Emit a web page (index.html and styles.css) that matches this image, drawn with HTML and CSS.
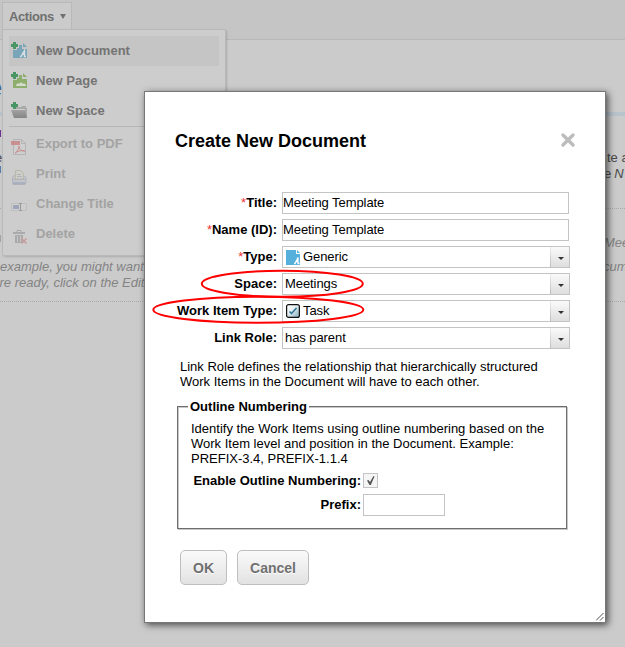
FILE: index.html
```html
<!DOCTYPE html>
<html lang="en">
<head>
<meta charset="utf-8">
<title>Create New Document</title>
<link rel="stylesheet" href="styles.css">
</head>
<body>
<div class="page">
  <header class="toolbar"><span class="tab">Actions <i class="caret"></i></span></header>
  <main class="doc">
    <div class="heading">e</div>
    <div class="rule"></div>
    <div class="row purple"><i class="sliver violet"></i></div>
    <div class="row dark"><span class="tail">e</span><span>te a</span></div>
    <div class="row dark second"><i class="sliver blue"></i><span>e <em>N</em></span></div>
    <div class="dots first"></div>
    <div class="row muted meet"><i class="sliver"></i><em>Mee</em></div>
    <div class="row muted example"><em>example, you might want</em><em>cum</em></div>
    <div class="row muted ready"><em>'re ready, click on the Edit</em></div>
    <div class="dots second-dots"></div>
  </main>

  <nav class="menu">
    <div class="item active">
      <svg class="icon" viewBox="0 0 16 16"><path fill="#79a5b8" d="M2 3h9v4h5v9H2z"/><path fill="#79a5b8" d="M12 1l4 4h-4z"/><path fill="#cbcbcb" d="M0 2h8v4H6v2H2V6H0z"/><path fill="#499564" d="M2 0h3v2h2v3H5v2H2V5H0V2h2z"/><path fill="none" stroke="#d7dfe2" stroke-width="1.4" d="M9 14.5h1l3.500-6v6H15M11 12h3"/></svg>
      <span>New Document</span></div>
    <div class="item">
      <svg class="icon" viewBox="0 0 16 16"><path fill="#8eae6d" d="M2 3h9v4h5v9H2z"/><path fill="#8eae6d" d="M12 1l4 4h-4z"/><path fill="#cbcbcb" d="M0 2h8v4H6v2H2V6H0z"/><path fill="#499564" d="M2 0h3v2h2v3H5v2H2V5H0V2h2z"/><path fill="#d5dccd" d="M5 14v-1l2-2 1 1 2-2 2 2 1-1 2 2v1z"/></svg>
      <span>New Page</span></div>
    <div class="item">
      <svg class="icon" viewBox="0 0 16 16"><defs><linearGradient id="fold" x2="0" y2="1"><stop stop-color="#a2a2a2"/><stop offset="1" stop-color="#858585"/></linearGradient></defs><path fill="#aaa" d="M3 5h7l1-1h4v3H3zM14 6h2v9h-2z"/><path fill="url(#fold)" d="M0 8h14l2 8H3z"/><path fill="#499564" d="M2 0h3v2h2v3H5v2H2V5H0V2h2z"/></svg>
      <span>New Space</span></div>
    <div class="separator"></div>
    <div class="item disabled">
      <svg class="icon" viewBox="0 0 16 16"><path fill="#cfcfcf" stroke="#b3b3b3" d="M2.500.5h8l4 4v11h-12z"/><path fill="none" stroke="#b3b3b3" d="M10.500.5v4h4"/><path fill="#c89090" d="M0 2h9v4H0z"/><path fill="none" stroke="#c98d8d" d="M4 14c3-2 4-5 4-7 0 3 2 5 6 5-4-1-7 0-10 2z"/></svg>
      <span>Export to PDF</span></div>
    <div class="item disabled">
      <svg class="icon" viewBox="0 0 16 16"><path fill="#c4c5c8" stroke="#afb2bb" d="M1.500 8.500 3 6.500h10l2 2v5l-1 2H2l-.5-2z"/><path fill="#cecec8" stroke="#b8b8ac" d="M4.500 10V1.500h5l3 3V10z"/><path stroke="#b0b4bc" d="M6 5.500h4M6 7.500h5M2 10.500h12"/><path fill="#aab0bd" d="M2 13h12v2H2z"/></svg>
      <span>Print</span></div>
    <div class="item disabled">
      <svg class="icon" viewBox="0 0 16 16"><path fill="#cecece" stroke="#bfbfbf" d="M.5 4.500h15v7H.5z"/><path fill="#9ea6b9" d="M2 6h6v4H2z"/><path fill="none" stroke="#9a9a9a" d="M8 4.500h3M9.500 4v8M8 11.500h3"/></svg>
      <span>Change Title</span></div>
    <div class="item disabled">
      <svg class="icon" viewBox="0 0 16 16"><path fill="none" stroke="#aaa" d="M6 3.500V1.500h4v2"/><path fill="#aaa" d="M2 3h12v2H2zM4 6h8v8H4z"/><path stroke="#c7c7c7" d="M6.500 7v6M9.500 7v6"/><path stroke="#c79b9b" stroke-width="1.500" d="M10.500 9.500l5 5M15.500 9.500l-5 5"/></svg>
      <span>Delete</span></div>
  </nav>

  <section class="dialog">
    <div class="dialog-head"><h1>Create New Document</h1>
      <svg class="close" viewBox="0 0 14 14"><path d="M2 2l10 10M12 2L2 12"/></svg></div>
    <div class="form">
      <label><b>*</b>Title:</label><div class="field"><span>Meeting Template</span></div>
      <label><b>*</b>Name (ID):</label><div class="field"><span>Meeting Template</span></div>
      <label><b>*</b>Type:</label>
      <div class="field select"><svg class="type-icon" viewBox="0 0 14 15"><path fill="#55b1dc" d="M0 0h10v4h4v11H0z"/><path fill="#55b1dc" d="M11 0l3 3h-3z"/><path fill="none" stroke="#fff" stroke-width="1.300" d="M8 13.500h1l3-6v6h1.500M10 11.500h2"/></svg><span>Generic</span><i class="drop"></i></div>
      <label>Space:</label><div class="field select"><span>Meetings</span><i class="drop"></i></div>
      <label>Work Item Type:</label>
      <div class="field select"><svg class="task-icon" viewBox="0 0 14 14"><defs><linearGradient id="task" x2="1" y2="1"><stop stop-color="#fff"/><stop offset=".4" stop-color="#e8f1f5"/><stop offset="1" stop-color="#82a8b9"/></linearGradient></defs><rect x=".6" y=".6" width="12.800" height="12.800" rx="2" fill="url(#task)" stroke="#111" stroke-width="1.200"/><path fill="none" stroke="#2c7194" stroke-width="1.500" d="M3.500 7.500l2 2 5-5.500"/></svg><span>Task</span><i class="drop"></i></div>
      <label>Link Role:</label><div class="field select"><span>has parent</span><i class="drop"></i></div>
    </div>
    <p class="hint">Link Role defines the relationship that hierarchically structured<br>Work Items in the Document will have to each other.</p>
    <fieldset class="outline">
      <legend>Outline Numbering</legend>
      <p>Identify the Work Items using outline numbering based on the<br>Work Item level and position in the Document. Example:<br>PREFIX-3.4, PREFIX-1.1.4</p>
      <div class="option"><label class="enable">Enable Outline Numbering:</label><svg class="check" viewBox="0 0 15 15"><rect x=".5" y=".5" width="14" height="14" fill="#f5f5f5" stroke="#c4c4c4"/><path fill="#555" d="M4 7.500l1.500-.5 1.500 2 3.500-6 1 .5-3.700 8.500H6.500z"/></svg></div>
      <div class="option prefix"><label>Prefix:</label><div class="field small"></div></div>
    </fieldset>
    <div class="buttons"><button class="ok">OK</button><button class="cancel">Cancel</button></div>
    <svg class="grip" viewBox="0 0 8 8"><path d="M0 7.500L7.500 0M4 7.500L7.500 4"/></svg>
  </section>

  <svg class="marks" viewBox="0 0 625 647"><ellipse cx="282.300" cy="283.800" rx="80.500" ry="13"/><ellipse cx="258.300" cy="309.800" rx="105" ry="13"/></svg>
</div>
</body>
</html>
```
FILE: styles.css
```css
* { box-sizing: border-box; }
body { margin: 0; font: 13px/15px "Liberation Sans", Arial, sans-serif; color: #000; }
p { margin: 0; }
svg { display: block; flex: none; }
.page { position: relative; width: 625px; height: 647px; overflow: hidden; background: #cbcbcb; }
.toolbar { height: 40px; padding: 2px; background: #c5c5c5; border-bottom: 1px solid #b8b8b8; }
.tab { display: flex; align-items: center; width: 70px; height: 28px; padding: 0 0 1px 6px; border: 1px solid #b9b9b9; border-bottom: 0; background: #cbcbcb; color: #707070; font-weight: bold; letter-spacing: -.4px; }
.caret { margin-left: 6px; border: 3px solid transparent; border-top: 5px solid #707070; border-bottom: 0; }

.doc { display: flex; flex-direction: column; }
.heading { height: 72px; padding-top: 36px; margin-left: -13px; font: bold 27px/25px "Liberation Sans", Arial, sans-serif; color: #476087; }
.rule { height: 4px; background: #b8c3cc; }
.row { display: flex; justify-content: space-between; height: 16px; white-space: nowrap; }
.purple { height: 34px; align-items: center; }
.sliver { width: 1px; height: 7px; background: #a2a2a2; }
.violet { background: #682f91; }
.blue { background: #547cab; }
.dark { color: #494949; }
.dark span:last-child { width: 18px; }
.dark .tail { margin-left: -5px; }
.dark.second span:last-child { width: 21px; letter-spacing: -.3px; }
.dots { border-top: 1px dotted #aaa; }
.first { margin-top: 26px; }
.muted { color: #848484; }
.meet { margin-top: 26px; height: 24px; }
.meet em { width: 21px; }
.example em:last-child { width: 22px; }
.ready em { margin-left: -3px; }
.second-dots { margin-top: 10px; }

.menu { position: absolute; left: 2px; top: 29px; width: 224px; height: 227px; padding: 6px; background: #cdcdcd; border: 1px solid #b9b9b9; border-radius: 2px; box-shadow: 1px 1px 2px rgba(0,0,0,.15); }
.item { display: flex; align-items: center; height: 30px; width: 210px; padding: 0 0 2px 2px; color: #747474; font-weight: bold; font-size: 13px; }
.item span { margin-left: 9px; }
.active { background: #c5c5c5; }
.icon { width: 16px; height: 16px; }
.separator { height: 1px; margin: 0 0 2px; background: #b6b6b9; }
.disabled { color: #a3a3a3; }
.disabled .icon { position: relative; top: 4px; }

.dialog { position: absolute; left: 144px; top: 91px; width: 462px; height: 532px; background: #fff; border: 1px solid #777; box-shadow: 2px 2px 7px rgba(0,0,0,.65); }
.dialog-head { display: flex; justify-content: space-between; height: 100px; padding: 38px 30px 0 30px; }
h1 { margin: 0; font-size: 18px; line-height: 22px; }
.close { width: 14px; height: 14px; margin-top: 3px; }
.close path { stroke: #bdbdbd; stroke-width: 3.400; stroke-linecap: round; }
.form { display: grid; grid-template-columns: 132px 288px; grid-auto-rows: 22px; gap: 5px; }
.form label { text-align: right; line-height: 21px; }
label { font-weight: bold; line-height: 22px; white-space: nowrap; }
label b { color: #e33; font-weight: normal; }
.field { display: flex; align-items: center; width: 287px; height: 22px; border: 1px solid #c4c4c4; background: #fff; }
.field span { padding-bottom: 1px; letter-spacing: -.07px; }
.select { width: 288px; padding-left: 2px; }
.type-icon { width: 14px; height: 15px; margin: 0 3px 0 1px; }
.task-icon { width: 14px; height: 14px; margin: 0 3px 0 1px; }
.drop { display: flex; align-items: center; justify-content: center; width: 19px; height: 20px; margin-left: auto; background: linear-gradient(#eee, #bbb) 0 0 / 1px 100% no-repeat, linear-gradient(#fafafa, #dedede); }
.drop::before { content: ""; margin: 2px 0 0 2px; border: 3px solid transparent; border-top-color: #333; border-bottom: 0; }
.hint { margin: 10px 0 0 35px; white-space: nowrap; }
.outline { width: 390px; height: 130px; margin: 10px 0 0 32px; padding: 7px 0 0 13px; border: 1px solid #6d6d6d; box-shadow: 1px 1px #c8c8c8, inset 1px 1px #c8c8c8; white-space: nowrap; }
legend { margin-left: -3px; padding: 0 2px; background: #fff; font-weight: bold; }
.option { display: flex; width: 254px; height: 22px; margin-top: 4px; }
.option label { width: 170px; margin-right: 2px; text-align: right; }
.check { width: 15px; height: 15px; margin-top: 3px; }
.prefix { margin-top: 2px; }
.small { width: 82px; }
.buttons { display: flex; gap: 10px; margin: 21px 0 0 35px; }
button { height: 35px; padding: 0; border: 1px solid #bebebe; border-radius: 5px; background: linear-gradient(#fafafa, #e2e2e2); font: bold 14px "Liberation Sans", Arial, sans-serif; color: #707070; text-shadow: 0 1px #fff; }
.ok { width: 47px; }
.cancel { width: 72px; }
.grip { position: absolute; right: 1px; bottom: 1px; width: 8px; height: 8px; }
.grip path { stroke: #555; stroke-width: 1; }
.marks { position: absolute; left: 0; top: 0; width: 625px; height: 647px; pointer-events: none; }
.marks ellipse { fill: none; stroke: #f00; stroke-width: 2; }
```
